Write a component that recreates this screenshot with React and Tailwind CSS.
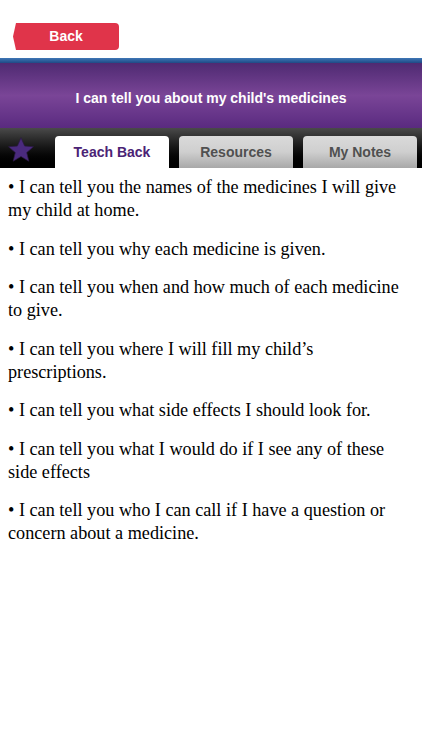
const items = [
  'I can tell you the names of the medicines I will give my child at home.',
  'I can tell you why each medicine is given.',
  'I can tell you when and how much of each medicine to give.',
  'I can tell you where I will fill my child\u2019s prescriptions.',
  'I can tell you what side effects I should look for.',
  'I can tell you what I would do if I see any of these side effects',
  'I can tell you who I can call if I have a question or concern about a medicine.',
];

function BackButton() {
  return (
    <button type="button" className="relative flex h-[27px] items-center">
      <svg width="12" height="27" viewBox="0 0 12 27" className="block">
        <path d="M12 0 L12 27 L3 27 L0 13.5 L3 0 Z" fill="#e0344a" />
      </svg>
      <span className="flex h-[27px] w-[94px] items-center justify-center rounded-r-[4px] bg-[#e0344a] pr-[12px] font-['Liberation_Sans',Arial,sans-serif] text-[14px] font-bold text-white">
        Back
      </span>
    </button>
  );
}

function Tab({ label, active }) {
  return (
    <div
      className={`flex h-[32px] w-[114px] items-center justify-center rounded-t-[4px] font-['Liberation_Sans',Arial,sans-serif] text-[14px] font-bold ${
        active
          ? 'bg-white text-[#4b2375]'
          : 'bg-gradient-to-b from-[#dadada] via-[#cfcfcf] to-[#a8a8a8] text-[#505050]'
      }`}
    >
      {label}
    </div>
  );
}

export default function App() {
  return (
    <div className="min-h-[750px] w-[422px] bg-white">
      <div className="flex h-[58px] items-start pl-[13px] pt-[23px]">
        <BackButton />
      </div>
      <div className="h-[5px] bg-gradient-to-b from-[#3f77b6] to-[#1f4a86]" />
      <div className="flex h-[65px] items-center justify-center bg-gradient-to-b from-[#4f2a72] via-[#7a4597] to-[#5a2a80] pt-[5px] font-['Liberation_Sans',Arial,sans-serif] text-[14px] font-bold text-white">
        I can tell you about my child's medicines
      </div>
      <div className="flex h-[40px] items-end bg-gradient-to-b from-[#4a4a4a] via-[#151515] to-black pl-[7px]">
        <svg width="28" height="28" viewBox="0 0 24 24" className="mb-[4px] mr-[20px]">
          <path
            d="M12 1.5l3.1 7.1 7.6.6-5.8 5 1.8 7.4L12 17.6l-6.7 4 1.8-7.4-5.8-5 7.6-.6z"
            fill="#4a2a7e"
            stroke="#2b1a44"
            strokeWidth="0.6"
          />
        </svg>
        <div className="flex gap-[10px]">
          <Tab label="Teach Back" active />
          <Tab label="Resources" />
          <Tab label="My Notes" />
        </div>
      </div>
      <div className="px-[8px] pt-[8px] font-['Liberation_Serif','Times_New_Roman',serif] text-[18.2px] leading-[23px] text-black">
        {items.map((t) => (
          <p key={t} className="mb-[15.5px]">
            {'\u2022 '}
            {t}
          </p>
        ))}
      </div>
    </div>
  );
}
